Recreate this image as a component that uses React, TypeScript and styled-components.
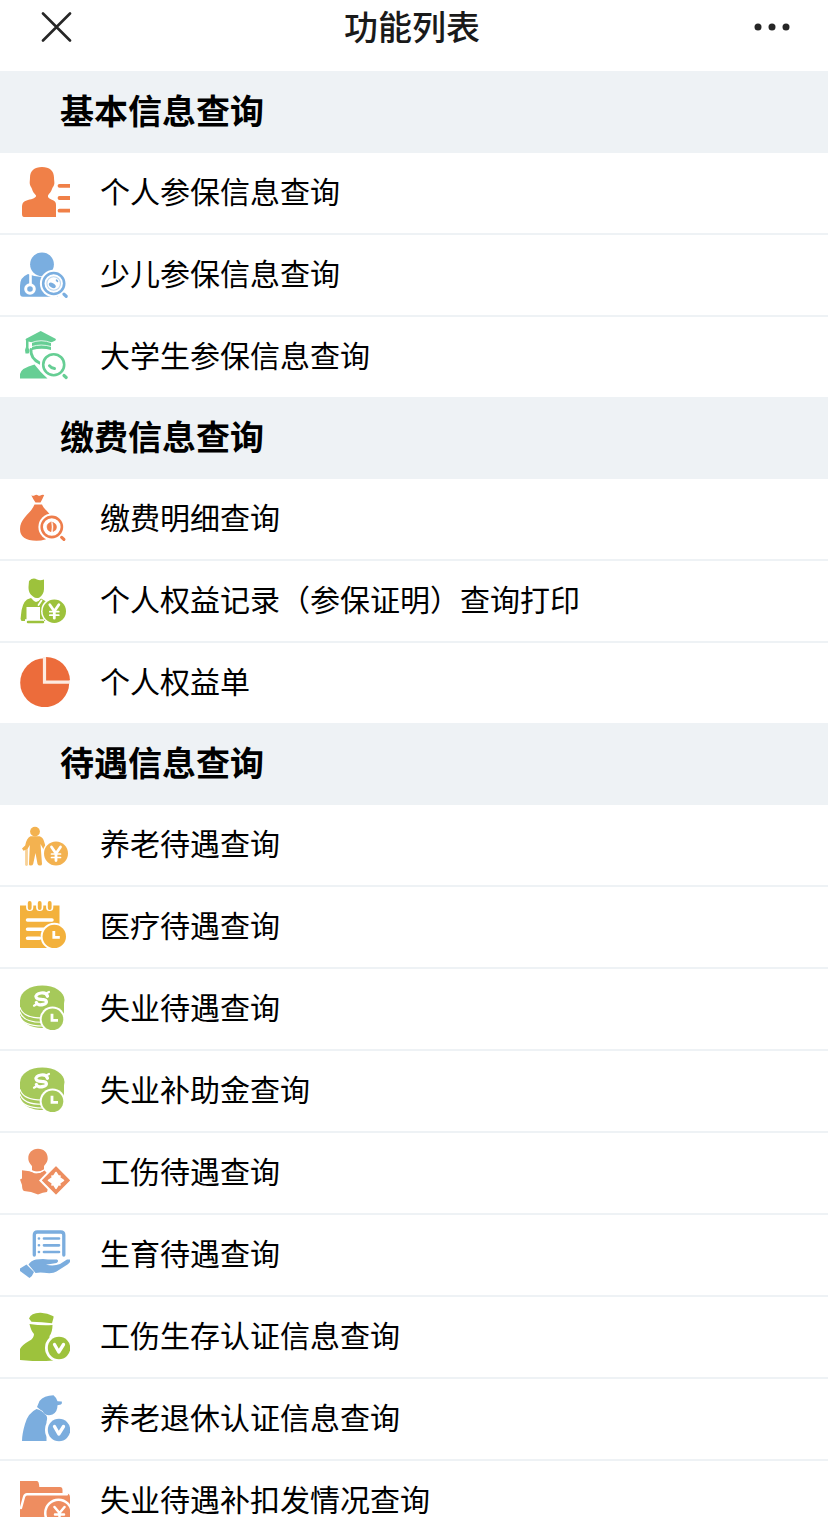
import React from 'react';
import styled, { createGlobalStyle } from 'styled-components';

const GlobalStyle = createGlobalStyle`
  * { box-sizing: border-box; }
  html, body { margin: 0; padding: 0; background: #fff; }
  body { height: 1517px; overflow: hidden; }
`;

const Page = styled.main`
  width: 100%;
  height: 1517px;
  overflow: hidden;
  background: #fff;
  color: #000;
  font-family: 'Liberation Sans', 'Noto Sans CJK SC', sans-serif;
`;

const NavBar = styled.header`
  display: flex;
  align-items: flex-start;
  justify-content: space-between;
  height: 71px;
  padding: 0 37px 0 33px;
`;

const NavButton = styled.button<{ $end?: boolean }>`
  display: flex;
  align-items: center;
  justify-content: ${(p) => (p.$end ? 'flex-end' : 'flex-start')};
  width: 60px;
  height: 54px;
  padding: 0 0 0 8px;
  border: 0;
  background: none;
  color: #262626;
`;

const NavTitle = styled.h1`
  margin: 0;
  padding-top: 1px;
  font-size: 34px;
  line-height: 54px;
  font-weight: 500;
  color: #1a1a1a;
`;

const SectionTitle = styled.h2`
  margin: 0;
  height: 82px;
  padding: 1px 0 0 60px;
  background: #eef2f5;
  font-size: 34px;
  line-height: 80px;
  font-weight: 700;
`;

const List = styled.ul`
  margin: 0;
  padding: 0;
  list-style: none;
`;

const Row = styled.li`
  display: flex;
  align-items: center;
  gap: 30px;
  height: 80px;
  padding: 0 20px 2px;

  & + & {
    height: 82px;
    border-top: 2px solid #eef2f5;
  }
`;

const Label = styled.span`
  padding-top: 2px;
  font-size: 30px;
  line-height: 50px;
  white-space: nowrap;
`;

const IconSvg = styled.svg<{ $color: string }>`
  flex: none;
  display: block;
  width: 50px;
  height: 50px;
  color: ${(p) => p.$color};
  fill: currentColor;
  stroke-linecap: round;
  stroke-linejoin: round;
`;

const line = (width: number, stroke = 'currentColor') => ({ fill: 'none', stroke, strokeWidth: width });

const Lens = ({ x, y, r }: { x: number; y: number; r: number }) => (
  <>
    <circle cx={x} cy={y} r={r + 2} fill="#fff" />
    <circle cx={x} cy={y} r={r - 1.3} {...line(2.6)} />
    <path d={`M${x + r - 1.5} ${y + r - 1}l2.2 2`} {...line(3.2)} />
  </>
);

const Yen = ({ x, y, r }: { x: number; y: number; r: number }) => (
  <>
    <circle cx={x} cy={y} r={r + 1.5} fill="#fff" />
    <circle cx={x} cy={y} r={r} />
    <path d={`M${x - 4.5} ${y - 6.5}l4.5 6.500l4.5 -6.5M${x} ${y}v7`} {...line(2.8, '#fff')} />
    <path d={`M${x - 4.5} ${y + 0.5}h9M${x - 4.5} ${y + 4}h9`} {...line(1.7, '#fff')} />
  </>
);

const Clock = ({ x, y, r }: { x: number; y: number; r: number }) => (
  <>
    <circle cx={x} cy={y} r={r + 2} fill="#fff" />
    <circle cx={x} cy={y} r={r} />
    <path d={`M${x - 0.5} ${y - 5.5}v6.5h6`} {...line(2.8, '#fff')} strokeLinecap="butt" strokeLinejoin="miter" />
  </>
);

const Check = ({ x, y }: { x: number; y: number }) => (
  <>
    <circle cx={x} cy={y} r="14" fill="#fff" />
    <circle cx={x} cy={y} r="11.2" />
    <path d={`M${x - 4.5} ${y - 3.5}l4.3 7.500l4.7 -7.5`} {...line(3.3, '#fff')} />
  </>
);

const Coins = () => (
  <>
    <path d="M0 17v14c0 8 10 14 22 14s22-6 22-14V17z" />
    <path d="M0 24.500c2 7 10 10.500 22 10.500M0 29c2 7 10 10.300 22 10.300M0 33.500c2 6 9 9.500 22 9.500" {...line(1.1, '#fff')} />
    <ellipse cx="22.3" cy="17" rx="22.2" ry="14.5" />
    <path d="M27.500 13.300c-.8-2.800-3.500-3.800-6.500-3.300c-3.800.6-5.500 2.300-4.800 4.300c1 2.500 4.500 1.700 7.300 2.300c3.800.8 4 3.600 0 4.800c-3.500 1-6.500.2-7.200-2" {...line(3.2, '#fff')} />
    <path d="M27 10l2-1M16 21.500l-2 1.200" {...line(2.2, '#fff')} />
    <Clock x={32.500} y={36.3} r={10.8} />
  </>
);

const icons: Record<string, { color: string; art: React.ReactNode }> = {
  person: {
    color: '#f08048',
    art: (
      <>
        <path d="M22 0C29.500 0 34 4 34 10.500C34 13 34.600 15 34.300 17C33.900 19.500 32.500 20 32 22C31.200 25 29 26.500 28 28.500C27.500 31 30 32 33 33.200C35 34 36 35.500 36 38V50H4Q2 50 2 47V40C2 35.500 4 34 8 33C12.500 32 16.500 30.500 16 28.500C14.500 26.500 12.700 25 12 22C11.500 20 10.200 19.500 9.800 17C9.500 15 10 13 10 10.500C10 4 14.500 0 22 0z" />
        <path d="M39.500 18.800h12M39.500 31h12M39.500 43.700h12" {...line(3.8)} />
      </>
    ),
  },
  child: {
    color: '#7aaee0',
    art: (
      <>
        <circle cx="22" cy="15.300" r="11.900" />
        <path d="M8 25q14 6 28 0l2 22.800H3q-3 0-3-3.500V37q0-9 8-12z" />
        <path d="M10.500 25.500v10" {...line(2.600, '#fff')} />
        <circle cx="10" cy="40" r="4.300" {...line(3, '#fff')} />
        <Lens x={33.700} y={34.500} r={11.800} />
        <circle cx="33.700" cy="34.500" r="6.800" {...line(1.100)} opacity=".5" />
        <ellipse cx="32.300" cy="36.300" rx="3.800" ry="2.200" transform="rotate(32 32.300 36.300)" />
        <path d="M36.600 31.300l.8 1" {...line(1.800)} />
      </>
    ),
  },
  student: {
    color: '#66ce94',
    art: (
      <>
        <path d="M20.700 0L35.500 7.800q1.200 1-.5 2L31 11.500V19q-9-2.500-19 0v-7.500L8.500 10.500V17q2 3 0 5.500H5.500Q4.200 19 6 16V9.500q-1-1 0-1.800z" />
        <path d="M11 11.800q10-4.300 20.500 0M12 15.500q9-3 19 0" {...line(1, '#fff')} opacity=".8" />
        <path d="M11 18.500q-.8 9 9 13.700" {...line(2.800)} />
        <path d="M0 47.500V43q1-6 14.500-9.500q6 8 13 14z" />
        <Lens x={33.700} y={33.700} r={11.800} />
        <path d="M29.500 34.800q1.500 2.300 5 2.700" {...line(3)} />
      </>
    ),
  },
  moneyBag: {
    color: '#ee7d4b',
    art: (
      <>
        <path d="M11.300 2.300q2 1 3.500 0t3 0t3 0t3.400-.3q-1.700 4-3.700 7.500h-5q-2.500-3.500-4.200-7.200z" />
        <path d="M14.500 11.500h7.500c2 5.500 8 7 10 15v16.500q-6 4.700-15.500 4.700Q0 47.700 0 36C0 25 11.500 20 14.500 11.500z" />
        <Lens x={31.800} y={34} r={11.400} />
        <path d="M31 29.200q-4 1-4 4.800t4 4.800q1-4.800 0-9.600zM33 29.500q3.500 1 3.500 4.500t-3.500 4.500q1-4.500 0-9z" stroke="currentColor" strokeWidth=".6" />
      </>
    ),
  },
  rightsRecord: {
    color: '#9dc23c',
    art: (
      <>
        <path d="M9 6q4-4 8-1.500q3 1.500 7 0V14c0 4-2 6.500-4.500 8.500q-3.500 1.500-6.500-1C10 19 8.500 17 8.500 12z" />
        <path d="M7 24.500l4-1.500q3 3.500 5 4q3-.5 5-3.500l6 3.500v19H1.500Q0 44 1 40Q2 28 7 24.500z" />
        <path d="M6.500 32H20v13H6.500zM5 44.300h19v4H5z" fill="#fff" />
        <path d="M8 46.900h15" {...line(2.500)} />
        <path d="M18.500 30l3-4.500" {...line(1.800, '#fff')} />
        <Yen x={34.300} y={36.200} r={11.700} />
      </>
    ),
  },
  pie: {
    color: '#ec6c3b',
    art: (
      <>
        <circle cx="24.700" cy="25.700" r="24.500" />
        <path d="M26 0A24 24 0 0 1 50 23.500H26z" />
        <path d="M24.500-1v26.200H51" fill="none" stroke="#fdebe1" strokeWidth="3.200" strokeLinecap="butt" strokeLinejoin="miter" />
      </>
    ),
  },
  pension: {
    color: '#f3b250',
    art: (
      <>
        <circle cx="15" cy="12.600" r="4.900" />
        <path d="M10.500 17.300h9q3.500 1 4.500 5l2 6.500l-2.300 2L20.500 25l1.500 20q0 1.500-2 1.500T17.500 45l-2-11l-2.300 11q-.5 1.500-2.500 1.500T9 45l.8-19l-2.300 4l-4 1.800L2 29.500l3.200-3Q6.500 19 10.500 17.300z" />
        <path d="M6.500 31v14.500" {...line(2.800)} opacity=".6" />
        <Yen x={36} y={34.500} r={12} />
      </>
    ),
  },
  medical: {
    color: '#f3b13c',
    art: (
      <>
        <path d="M0 4.500h39.500v42.500H0z" />
        <path d="M9.700-1v7.500M19.700-1v7.500M29.700-1v7.500" {...line(7.200, '#fff')} />
        <path d="M9.700 2v5M19.700 2v5M29.700 2v5" {...line(3.800)} />
        <path d="M7.500 19h24.500M7.500 28.200h16.500M7.500 37.300h12" {...line(3.500, '#fff')} />
        <Clock x={34.300} y={35.400} r={11.700} />
      </>
    ),
  },
  coins: { color: '#a6c95a', art: <Coins /> },
  injury: {
    color: '#ed8e60',
    art: (
      <>
        <path d="M18 1.700c6 0 9.700 4 9.700 9.500c0 4-2.200 5.500-3.700 8v4q-6 2.500-12 0v-4c-1.500-2.500-3.700-4-3.700-8C8.300 6 12 1.700 18 1.700z" />
        <path d="M2 23.300q9 .7 12.500 3q6 .5 10-3L31 31l-4 14q-4 0-9 2.500q-7-3.500-14-3.500Q2 43 2 38l-2-5.500l2-1z" />
        <path d="M3 22.500q8 .5 12 3q5 .5 9-2.500" {...line(1.200, '#fff')} />
        <path d="M36 16L53 33.400L36 51L19 33.400z" fill="#fff" />
        <path d="M36 20L49.400 33.400L36 46.800L22.600 33.400z" stroke="currentColor" strokeWidth="1.200" />
        <path d="M36 25.500l2.500 4l1.500-.5l-.5 1.700l4 2.700l-4 2.800l.5 1.700l-1.500-.5l-2.500 4l-2.500-4l-1.500.5l.5-1.700l-4-2.800l4-2.700l-.5-1.700l1.500.5z" fill="#fff" stroke="#fff" strokeWidth="1.600" />
      </>
    ),
  },
  maternity: {
    color: '#7badde',
    art: (
      <>
        <path d="M14.300 26V6q0-3 3-3h23.500q3 0 3 3v20" {...line(3.300)} />
        <path d="M24 9.500H39M24 16.300H39M24 23H39" {...line(2.700)} />
        <path d="M18.900 9.500h.1M18.900 16.300h.1M18.900 23h.1" {...line(2.600)} />
        <path d="M8.500 35.500q2.500-4 7.500-5q8-.8 12 0h9q2.500 1.500-.5 3.500L26 35.800q8 1.700 14-.8l7-4.500h4q-.5 3-3.500 5l-11 7q-4 2.500-12.500 1.200q-5-.5-8.500.3z" />
        <path d="M0 39.500l6.500-4L14 43q-1.500 4-4.500 6L0 42z" />
      </>
    ),
  },
  injuryCheck: {
    color: '#9dc23c',
    art: (
      <>
        <path d="M9 7.500q2-5.500 11-5.700q7-.2 13.500 3.500v1.500l-1.500 5.400q-10-1.200-20.500-1.500z" />
        <path d="M9.500 13q12 1.800 23 1q0 7-3 11v6l4 18.500Q17 51 0 49V38q2-4 9-8q5-2.500 5-7q-3-3-4.500-10z" />
        <Check x={39} y={37} />
      </>
    ),
  },
  retireCheck: {
    color: '#7badde',
    art: (
      <>
        <path d="M19.500 8q4.500-5.500 14-5.700q3.500 3 4 6l4.300.2q.7 2-.8 3l-3.500.8q0 7-5 9.200q-5 2-8.500-1q-1-3-4-4l-3-2.500z" />
        <path d="M16.500 16q5 1 8 5q4 2 2 8v19H2q0-7 3-17q3-11 11.500-15z" />
        <Check x={39} y={37} />
      </>
    ),
  },
  folder: {
    color: '#ee8d60',
    art: (
      <>
        <path d="M0 6h17q2 0 2.300 6H40q2.500 0 2.500 3v3.500h5q2.500.5 2.500 4V50H0z" />
        <path d="M1 33l3-11q.8-2.800 3-2.800H47" {...line(2.400, '#fff')} />
        <circle cx="38.500" cy="38" r="14.500" fill="#fff" />
        <circle cx="38.500" cy="38" r="12" />
        <path d="M34.500 32l5 6l5-6M39.500 38v10M35 39.500h9" {...line(2.500, '#fff')} />
      </>
    ),
  },
};

const sections = [
  {
    title: '基本信息查询',
    items: [
      ['person', '个人参保信息查询'],
      ['child', '少儿参保信息查询'],
      ['student', '大学生参保信息查询'],
    ],
  },
  {
    title: '缴费信息查询',
    items: [
      ['moneyBag', '缴费明细查询'],
      ['rightsRecord', '个人权益记录（参保证明）查询打印'],
      ['pie', '个人权益单'],
    ],
  },
  {
    title: '待遇信息查询',
    items: [
      ['pension', '养老待遇查询'],
      ['medical', '医疗待遇查询'],
      ['coins', '失业待遇查询'],
      ['coins', '失业补助金查询'],
      ['injury', '工伤待遇查询'],
      ['maternity', '生育待遇查询'],
      ['injuryCheck', '工伤生存认证信息查询'],
      ['retireCheck', '养老退休认证信息查询'],
      ['folder', '失业待遇补扣发情况查询'],
    ],
  },
];

export default function App() {
  return (
    <Page>
      <GlobalStyle />
      <NavBar>
        <NavButton aria-label="关闭">
          <svg width="31" height="30" viewBox="0 0 31 30" fill="none" stroke="currentColor" strokeWidth="2.6" strokeLinecap="round">
            <path d="M2 1.500l27 27M29 1.500l-27 27" />
          </svg>
        </NavButton>
        <NavTitle>功能列表</NavTitle>
        <NavButton $end aria-label="更多">
          <svg width="38" height="8" viewBox="0 0 38 8" fill="currentColor">
            <circle cx="5" cy="4" r="3.500" />
            <circle cx="19" cy="4" r="3.500" />
            <circle cx="33" cy="4" r="3.500" />
          </svg>
        </NavButton>
      </NavBar>
      {sections.map((section) => (
        <section key={section.title}>
          <SectionTitle>{section.title}</SectionTitle>
          <List>
            {section.items.map(([icon, label]) => (
              <Row key={label}>
                <IconSvg $color={icons[icon].color} viewBox="0 0 50 50" aria-hidden>
                  {icons[icon].art}
                </IconSvg>
                <Label>{label}</Label>
              </Row>
            ))}
          </List>
        </section>
      ))}
    </Page>
  );
}
